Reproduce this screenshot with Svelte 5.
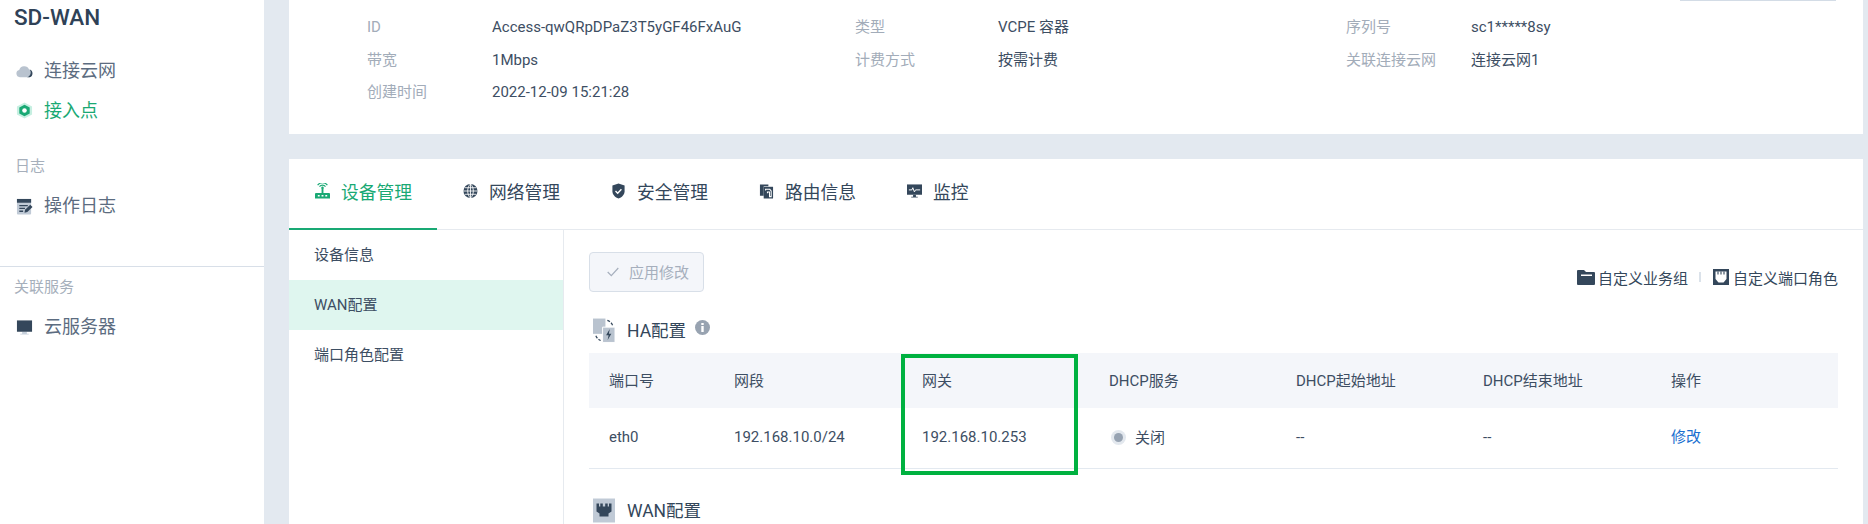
<script>
  const info = [
    [['ID', 'Access-qwQRpDPaZ3T5yGF46FxAuG'], ['类型', 'VCPE 容器'], ['序列号', 'sc1*****8sy']],
    [['带宽', '1Mbps'], ['计费方式', '按需计费'], ['关联连接云网', '连接云网1']],
    [['创建时间', '2022-12-09 15:21:28'], null, null]
  ];
  const heads = ['端口号', '网段', '网关', 'DHCP服务', 'DHCP起始地址', 'DHCP结束地址', '操作'];
</script>

{#snippet router()}
  <svg class="tabicon" viewBox="0 0 16 16"><path d="M1 10h14a1 1 0 0 1 1 1v5H0v-5a1 1 0 0 1 1-1z" fill="#19a974"/><path d="M7 5h2v5.500H7z" fill="#19a974"/><circle cx="8" cy="4.600" r="1.300" fill="#19a974"/><path d="M4.800 3.400a3.900 3.900 0 0 1 6.400 0M2.800 1.800a6.500 6.500 0 0 1 10.400 0" fill="none" stroke="#19a974" stroke-width="1.200"/><path d="M3 13h2M7 13h2M11 13h2" stroke="#fff" stroke-width="1.500"/></svg>
{/snippet}

<div class="page">
  <aside class="side">
    <div class="title">SD-WAN</div>
    <div class="item">
      <svg class="navicon" viewBox="0 0 18 18"><g transform="translate(0 2)"><path d="M4 13a3.800 3.800 0 0 1-.6-7.500A5.500 5.500 0 0 1 13.800 4.800 4.200 4.200 0 0 1 14 13z" fill="#b9c3cf"/><path d="M11.500 13a5 5 0 0 0 3-8A4.200 4.200 0 0 1 14.500 13z" fill="#34475b"/></g></svg>
      <span>连接云网</span>
    </div>
    <div class="item on">
      <svg class="navicon" viewBox="0 0 18 18"><path d="M9 .5l8 4.300v8.400l-8 4.300-8-4.300V4.800z" fill="#c6efe1"/><path d="M9 2.800l5.500 3.100v6.200L9 15.200l-5.500-3.100V5.900z" fill="#19a974"/><circle cx="9" cy="9" r="2.400" fill="#fff"/></svg>
      <span>接入点</span>
    </div>
    <div class="group g1">日志</div>
    <div class="item i1">
      <svg class="navicon" viewBox="0 0 18 18"><path d="M1 1h15v15.500a1 1 0 0 1-1 1H2a1 1 0 0 1-1-1z" fill="#c0cad6"/><path d="M1 1h15v4H1z" fill="#34475b"/><path d="M3.500 8h9M3.500 11h6M3.500 14h4" stroke="#34475b" stroke-width="1.400"/><path d="M9 15.500l.6-3 5.500-5.300 2.400 2.300-5.500 5.400z" fill="#34475b"/></svg>
      <span>操作日志</span>
    </div>
    <div class="rule"></div>
    <div class="group g2">关联服务</div>
    <div class="item i1">
      <svg class="navicon" viewBox="0 0 18 15"><path d="M6.500 12h5v2h2v1h-9v-1h2z" fill="#c6d0db"/><path d="M1 0h16v12H1z" fill="#34475b"/></svg>
      <span>云服务器</span>
    </div>
  </aside>

  <main class="main">
    <section class="card top">
      <div class="edge"></div>
      {#each info as row}
        <div class="inforow">
          {#each row as cell}
            <span class="lab">{cell ? cell[0] : ''}</span>
            <span class="val">{cell ? cell[1] : ''}</span>
          {/each}
        </div>
      {/each}
    </section>

    <section class="card bottom">
      <nav class="tabs">
        <div class="tab active">
          {@render router()}
          <span>设备管理</span>
        </div>
        <div class="tab">
          <svg class="tabicon" viewBox="0 0 16 16"><circle cx="8" cy="8" r="7.500" fill="#34475b"/><path d="M8 .5v15M.5 8h15M1.800 4.500h12.400M1.800 11.500h12.400M8 .5C4 4 4 12 8 15.500M8 .5c4 3.500 4 11.500 0 15" fill="none" stroke="#fff" stroke-width=".9"/></svg>
          <span>网络管理</span>
        </div>
        <div class="tab">
          <svg class="tabicon" viewBox="0 0 16 16"><path d="M8 0l6.500 2.200v6C14.500 12 11.500 14.800 8 16c-3.500-1.200-6.500-4-6.500-7.800v-6z" fill="#34475b"/><path d="M4.800 8l2.300 2.300 4-4.200" fill="none" stroke="#fff" stroke-width="1.500"/></svg>
          <span>安全管理</span>
        </div>
        <div class="tab">
          <svg class="tabicon" viewBox="0 0 16 16"><path d="M1 1h9v2H5v10H1z" fill="#34475b"/><path d="M5 3.500h10V16H5z" fill="#34475b"/><path d="M7 7.500V6.200h4.500L13 8v6h-1.800V9H9v1.500" fill="none" stroke="#fff" stroke-width="1.100"/></svg>
          <span>路由信息</span>
        </div>
        <div class="tab">
          <svg class="tabicon" viewBox="0 0 16 16"><path d="M0 1h16v11H0z" fill="#34475b"/><path d="M6.500 12h3v2h2v1h-7v-1h2z" fill="#34475b"/><path d="M2 6.800h3.200l1-2.300 1.700 4.500 1.200-2.200H14" fill="none" stroke="#fff" stroke-width="1"/></svg>
          <span>监控</span>
        </div>
      </nav>

      <div class="body">
        <div class="menu">
          <div class="mi">设备信息</div>
          <div class="mi cur">WAN配置</div>
          <div class="mi">端口角色配置</div>
        </div>

        <div class="content">
          <div class="toolbar">
            <button class="apply">
              <svg class="check" viewBox="0 0 12 10"><path d="M.7 5l3.600 3.600L11.300 1" fill="none" stroke="#a6afbd" stroke-width="1.200"/></svg>
              应用修改
            </button>
            <div class="links">
              <svg class="lk1" viewBox="0 0 18 15"><path d="M1 0h6l2 2h8a1 1 0 0 1 1 1v11a1 1 0 0 1-1 1H1a1 1 0 0 1-1-1V1a1 1 0 0 1 1-1z" fill="#34475b"/><path d="M4 4.500h11v1.500H4z" fill="#fff"/></svg>
              <span>自定义业务组</span>
              <i class="sep"></i>
              <svg class="lk2" viewBox="0 0 16 16"><path d="M0 0h16v16H0z" fill="#34475b"/><path d="M2.500 2.500h11v7.500l-3 3.500h-5l-3-3.500z" fill="#fff"/><path d="M5 2.500v3M8 2.500v3M11 2.500v3" stroke="#34475b" stroke-width="1.100"/></svg>
              <span>自定义端口角色</span>
            </div>
          </div>

          <div class="sec">
            <svg class="secicon" viewBox="0 0 23 25"><path d="M0 0h13v16H0z" fill="#b9c3cf"/><path d="M10 9h13v16H10z" fill="#b9c3cf" stroke="#fff" stroke-width="1"/><path d="M17.500 11l-3.800 6.500h2.600l-1 5 3.900-6.700h-2.600z" fill="#34475b"/><path d="M15 2a9 9 0 0 1 5.500 5M3 18a9 9 0 0 0 5 5" fill="none" stroke="#34475b" stroke-width="1.300" stroke-dasharray="3 1.500"/></svg>
            <h3>HA配置</h3>
            <svg class="infoi" viewBox="0 0 15 15"><circle cx="7.500" cy="7.500" r="7.500" fill="#98a3b1"/><path d="M6.300 3h2.400v2H6.300zM6.300 6h2.400v6H6.300z" fill="#fff"/></svg>
          </div>

          <div class="table">
            <div class="thead">
              {#each heads as h}<span>{h}</span>{/each}
            </div>
            <div class="tr">
              <span>eth0</span>
              <span>192.168.10.0/24</span>
              <span>192.168.10.253</span>
              <span class="st"><i class="dot"></i>关闭</span>
              <span>--</span>
              <span>--</span>
              <span class="link">修改</span>
            </div>
            <div class="mark"></div>
          </div>

          <div class="sec wan">
            <svg class="secicon" viewBox="0 0 22 24"><path d="M0 0h22v24H0z" fill="#c0cad6"/><path d="M3.500 5H6V8H7.300V5H9.800V8H12.200V5H14.700V8H16V5H18.500V13L15.500 15V18H6.500V15L3.500 13Z" fill="#34475b"/></svg>
            <h3>WAN配置</h3>
          </div>
        </div>
      </div>
    </section>
  </main>
</div>

<style>
  :global(body) { margin: 0; background: #e3e9f0; }
  .page {
    display: flex;
    height: 524px;
    overflow: hidden;
    background: #e3e9f0;
    font-family: Roboto, "Noto Sans CJK SC", sans-serif;
    font-size: 15px;
    color: #34475b;
  }
  .side { width: 264px; flex: none; background: #fff; }
  .title { height: 34px; line-height: 34px; margin: 0 0 17.5px 14px; font-size: 22.5px; font-weight: 500; color: #2f4257; }
  .item { display: flex; align-items: center; height: 39px; padding-left: 16px; font-size: 18px; color: #5c6c80; }
  .item span { margin: 0 0 4px 11px; }
  .item.on { color: #19a974; }
  .item.on span { margin-bottom: 2px; }
  .item.i1 { margin-top: 10.5px; }
  .navicon { width: 17px; height: 17px; flex: none; }
  .group { height: 20px; line-height: 20px; font-size: 15px; color: #a6afbb; }
  .g1 { margin: 26.5px 0 0 15px; }
  .g2 { margin: 10px 0 0 14px; }
  .rule { height: 1px; margin-top: 40.5px; background: #d8dfe8; }

  .main { width: 1574px; margin-left: 25px; display: flex; flex-direction: column; gap: 25px; }
  .card { background: #fff; }
  .top { height: 134px; flex: none; }
  .edge { height: 1px; width: 156px; margin: 0 27px 10px auto; background: #d3dce6; }
  .inforow {
    display: grid;
    grid-template-columns: 125px 363px 143px 348px 125px 1fr;
    height: 32.5px;
    line-height: 32.5px;
    padding-left: 78px;
  }
  .lab { color: #a2acb9; }
  .val { color: #3d4e63; }

  .bottom { flex: 1; display: flex; flex-direction: column; min-height: 0; }
  .tabs { display: flex; height: 71px; flex: none; border-bottom: 1px solid #e6eaef; box-sizing: border-box; }
  .tab {
    display: flex; align-items: center; gap: 11px;
    width: 148px; box-sizing: border-box; height: 70px;
    padding: 0 0 6px 26px;
    font-size: 17.75px; color: #34475b;
  }
  .tab.active { color: #19a974; border-bottom: 2.500px solid #19a974; height: 71px; padding-bottom: 4.5px; }
  .tabicon { width: 15px; height: 16px; flex: none; }

  .body { flex: 1; display: flex; min-height: 0; }
  .menu { width: 274px; flex: none; border-right: 1px solid #e6eaef; }
  .mi { height: 50px; line-height: 50px; padding-left: 25px; color: #3d4e63; }
  .mi.cur { background: #dff6ef; }

  .content { flex: 1; padding: 22px 25px 0; min-width: 0; }
  .toolbar { display: flex; justify-content: space-between; align-items: flex-start; height: 40px; }
  .apply {
    display: flex; align-items: center; gap: 10px;
    width: 115px; height: 40px; box-sizing: border-box;
    padding: 0 0 2px 17px;
    background: #f4f6fa; border: 1px solid #d8dfe8; border-radius: 4px;
    font: inherit; color: #a6afbd;
  }
  .check { width: 12px; height: 10px; margin-top: 2px; }
  .links { display: flex; align-items: center; height: 20px; margin-top: 15px; color: #34475b; }
  .lk1 { width: 18px; height: 15px; margin-right: 3px; }
  .lk2 { width: 16px; height: 16px; margin-right: 4px; }
  .sep { width: 2px; height: 10px; background: #dbe2ea; margin: 0 12px 0 11px; }

  .sec { display: flex; align-items: center; height: 26px; margin: 25px 0 10px 4px; color: #34475b; }
  .secicon { width: 22px; height: 25px; flex: none; }
  .sec h3 { margin: 0 0 2px 12px; font-size: 17.5px; font-weight: 400; }
  .infoi { width: 15px; height: 15px; margin: -5px 0 0 9px; }
  .wan { margin-top: 28px; }

  .table { position: relative; }
  .thead, .tr { display: grid; grid-template-columns: 125px 188px 187px 187px 187px 188px 1fr; padding-left: 20px; }
  .thead { height: 55px; line-height: 56px; background: #f4f6fa; color: #3d4e63; }
  .tr { height: 60px; line-height: 58px; border-bottom: 1px solid #e3e9f0; color: #3d4e63; }
  .st { display: flex; align-items: center; margin-top: -1px; margin-left: 2px; height: 61px; }
  .dot { width: 9px; height: 9px; margin-right: 12px; border-radius: 50%; background: #97a3b2; box-shadow: 0 0 0 3px #e3e8ee; margin-left: 3px; }
  .link { color: #1a6fd0; }
  .mark { position: absolute; left: 312px; top: 1px; width: 177px; height: 121px; box-sizing: border-box; border: 4px solid #00b140; }
</style>
